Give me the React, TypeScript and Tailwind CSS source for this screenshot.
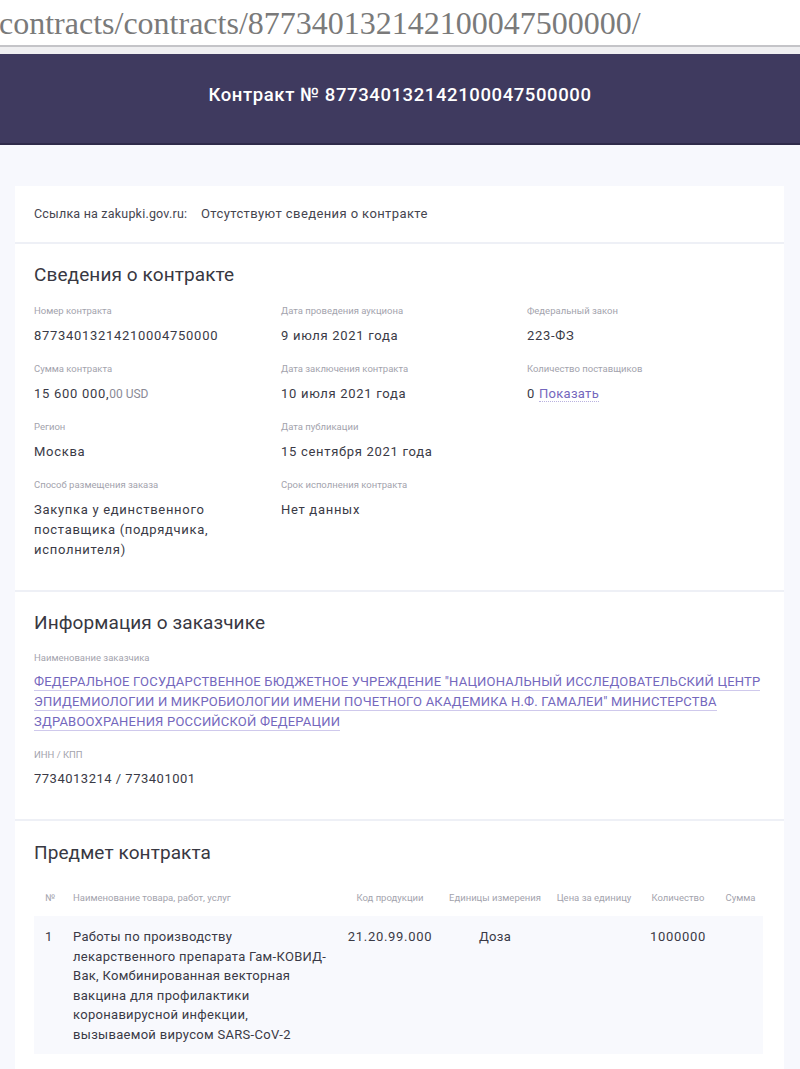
const body = "font-['Roboto',sans-serif]";

function Field({ label, children }: { label: string; children: React.ReactNode }) {
    return (
        <div>
            <div className="text-[9.5px] leading-[12px] text-[#a3a3ad]">{label}</div>
            <div className="mt-[9px] text-[13px] leading-[20px] text-[#3a3a46] tracking-[0.7px]">{children}</div>
        </div>
    );
}

function Heading({ children }: { children: React.ReactNode }) {
    return <h2 className="text-[19px] leading-[24px] text-[#383842] tracking-[0.1px]">{children}</h2>;
}

const columns = [
    { title: '№', width: 'w-[29px]', align: 'text-left pl-[11px]' },
    { title: 'Наименование товара, работ, услуг', width: 'w-[277px]', align: 'text-left pl-[10px]' },
    { title: 'Код продукции', width: 'w-[100px]', align: 'text-center' },
    { title: 'Единицы измерения', width: 'w-[110px]', align: 'text-center' },
    { title: 'Цена за единицу', width: 'w-[88px]', align: 'text-center' },
    { title: 'Количество', width: 'w-[80px]', align: 'text-center' },
    { title: 'Сумма', width: 'w-[45px]', align: 'text-center' },
];

const subjectLines = [
    'Работы по производству',
    'лекарственного препарата Гам-КОВИД-',
    'Вак, Комбинированная векторная',
    'вакцина для профилактики',
    'коронавирусной инфекции,',
    'вызываемой вирусом SARS-CoV-2',
];

export default function App() {
    return (
        <div className={`min-h-[1069px] w-[800px] overflow-hidden bg-[#f7f8fd] ${body}`}>
            <div className="bg-white h-[45px] flex items-center">
                <span className="font-['Liberation_Serif',serif] text-[32px] leading-none text-[#7a7a7a] -ml-[1px] whitespace-nowrap">
                    contracts/contracts/877340132142100047500000/
                </span>
            </div>
            <div className="h-[2px] bg-[#c4c4c8]" />
            <div className="h-[7px] bg-[#efeff1]" />
            <header className="h-[91px] pb-[6px] bg-[#3f3a5f] border-b-2 border-[#2f2b4a] flex items-center justify-center">
                <h1 className="text-white text-[18.5px] font-medium tracking-[0.6px]">
                    Контракт № 877340132142100047500000
                </h1>
            </header>

            <main className="pt-[41px] pl-[15px] pr-[16px]">
                <div className="bg-white">
                    <div className="px-[19px] h-[58px] flex items-center border-b-2 border-[#eef0f6] text-[12.5px] text-[#45454f] tracking-[0.2px]">
                        <span className="w-[167px]">Ссылка на zakupki.gov.ru:</span>
                        <span className="text-[13px] tracking-[0.4px]">Отсутствуют сведения о контракте</span>
                    </div>

                    <section className="px-[19px] pt-[19px] pb-[30px] border-b-2 border-[#eef0f6]">
                        <Heading>Сведения о контракте</Heading>
                        <div className="mt-[18px] grid grid-cols-[247px_246px_1fr] gap-y-[17px]">
                            <Field label="Номер контракта">87734013214210004750000</Field>
                            <Field label="Дата проведения аукциона">9 июля 2021 года</Field>
                            <Field label="Федеральный закон">223-ФЗ</Field>
                            <Field label="Сумма контракта">
                                15 600 000,<span className="text-[12px] text-[#8a8a96] tracking-[0px]">00 USD</span>
                            </Field>
                            <Field label="Дата заключения контракта">10 июля 2021 года</Field>
                            <Field label="Количество поставщиков">
                                0{' '}
                                <span className="text-[#7467bd] tracking-[0.3px] border-b border-dotted border-[#b9b2e0]">Показать</span>
                            </Field>
                            <Field label="Регион">Москва</Field>
                            <Field label="Дата публикации">15 сентября 2021 года</Field>
                            <div />
                            <Field label="Способ размещения заказа">
                                <span className="block w-[175px]">Закупка у единственного поставщика (подрядчика, исполнителя)</span>
                            </Field>
                            <Field label="Срок исполнения контракта">Нет данных</Field>
                        </div>
                    </section>

                    <section className="px-[19px] pt-[19px] pb-[30px] border-b-2 border-[#eef0f6]">
                        <Heading>Информация о заказчике</Heading>
                        <div className="mt-[17px] text-[9.5px] leading-[12px] text-[#a3a3ad]">Наименование заказчика</div>
                        <p className="mt-[8px] text-[13px] leading-[20px] text-[#7467bd] tracking-[0.2px]">
                            <span className="border-b border-[#cfc9ec] pb-[1px]">
                                ФЕДЕРАЛЬНОЕ ГОСУДАРСТВЕННОЕ БЮДЖЕТНОЕ УЧРЕЖДЕНИЕ "НАЦИОНАЛЬНЫЙ ИССЛЕДОВАТЕЛЬСКИЙ ЦЕНТР
                                ЭПИДЕМИОЛОГИИ И МИКРОБИОЛОГИИ ИМЕНИ ПОЧЕТНОГО АКАДЕМИКА Н.Ф. ГАМАЛЕИ" МИНИСТЕРСТВА
                                ЗДРАВООХРАНЕНИЯ РОССИЙСКОЙ ФЕДЕРАЦИИ
                            </span>
                        </p>
                        <div className="mt-[17px] text-[9.5px] leading-[12px] text-[#a3a3ad]">ИНН / КПП</div>
                        <div className="mt-[8px] text-[13px] leading-[20px] text-[#3a3a46] tracking-[0.5px]">
                            7734013214 / 773401001
                        </div>
                    </section>

                    <section className="pl-[19px] pr-[21px] pt-[20px] pb-[20px]">
                        <Heading>Предмет контракта</Heading>
                        <table className="mt-[15px] w-[729px] table-fixed border-collapse">
                            <thead>
                                <tr className="h-[36px]">
                                    {columns.map((c) => (
                                        <th
                                            key={c.title}
                                            className={`${c.width} ${c.align} font-normal text-[9.5px] text-[#a3a3ad] whitespace-nowrap`}
                                        >
                                            {c.title}
                                        </th>
                                    ))}
                                </tr>
                            </thead>
                            <tbody>
                                <tr className="bg-[#f8f9fd] align-top text-[13px] leading-[19.5px] text-[#3a3a46] tracking-[0.3px]">
                                    <td className="pl-[11px] pt-[11px] pb-[10px]">1</td>
                                    <td className="pl-[10px] pt-[11px] pb-[10px] whitespace-nowrap">
                                        {subjectLines.map((line) => (
                                            <div key={line}>{line}</div>
                                        ))}
                                    </td>
                                    <td className="pt-[11px] text-center tracking-[0.7px]">21.20.99.000</td>
                                    <td className="pt-[11px] text-center">Доза</td>
                                    <td className="pt-[11px]" />
                                    <td className="pt-[11px] text-center tracking-[0.7px]">1000000</td>
                                    <td className="pt-[11px]" />
                                </tr>
                            </tbody>
                        </table>
                    </section>
                </div>
            </main>
        </div>
    );
}
